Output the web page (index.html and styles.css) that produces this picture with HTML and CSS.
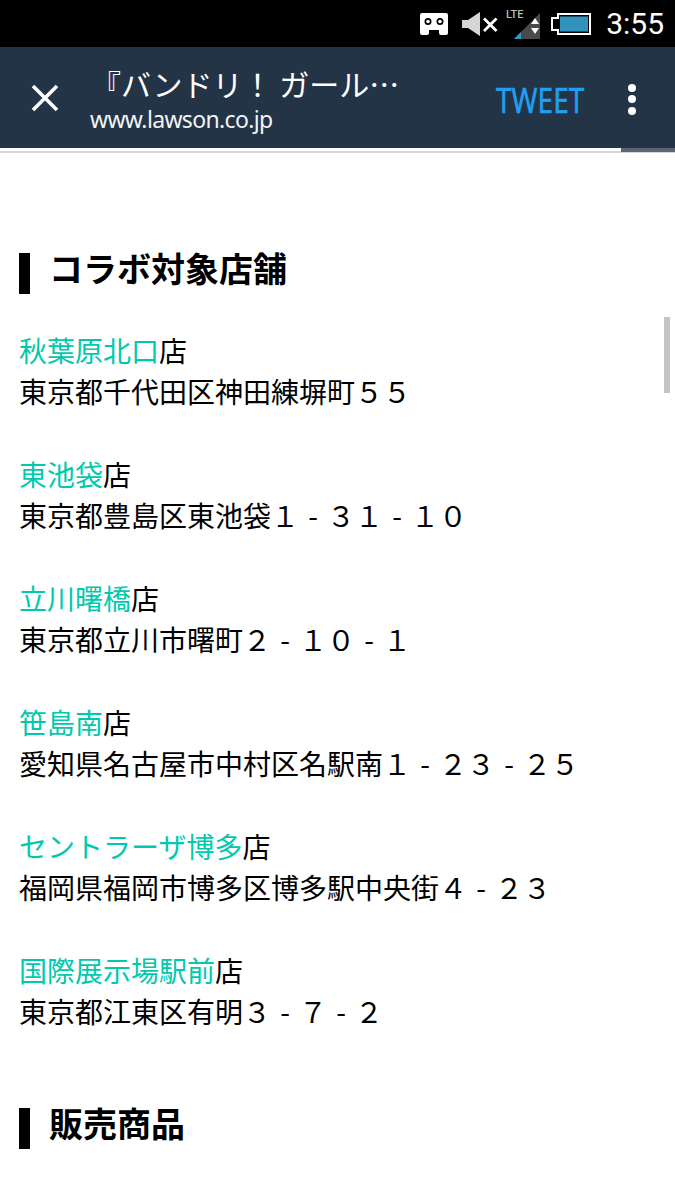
FILE: index.html
```html
<!DOCTYPE html>
<html lang="ja">
<head>
  <meta charset="UTF-8" />
  <title>コラボ対象店舗</title>
  <link rel="stylesheet" href="styles.css">
</head>
<body>

  <div class="status-bar">
    <svg class="ic-voicemail" width="28" height="22" viewBox="0 0 28 22">
      <path fill="#fff" fill-rule="evenodd" d="M2 0h24a2 2 0 0 1 2 2v18a2 2 0 0 1-2 2h-5a2 2 0 0 1-2-2v-3H9v3a2 2 0 0 1-2 2H2a2 2 0 0 1-2-2V2a2 2 0 0 1 2-2zM8 5a3.5 3.5 0 1 0 0 7 3.5 3.5 0 0 0 0-7zm12 0a3.5 3.5 0 1 0 0 7 3.5 3.5 0 0 0 0-7z"/>
      <circle cx="8" cy="8.500" r="1.800" fill="#fff"/>
      <circle cx="20" cy="8.500" r="1.800" fill="#fff"/>
    </svg>
    <svg class="ic-mute" width="36" height="24" viewBox="0 0 36 24">
      <path fill="#d6d6d6" d="M0 8h6l12-8v24L6 16H0z"/>
      <path stroke="#fff" stroke-width="2.800" d="M22 6.500l12.500 12.500M34.500 6.500L22 19"/>
    </svg>
    <svg class="ic-signal" width="36" height="32" viewBox="0 0 36 32">
      <text x="2" y="11" class="lte">LTE</text>
      <path fill="#4a4a4a" d="M36 6v26H10z"/>
      <path fill="#2b9ac4" d="M17 25v7H10z"/>
      <path fill="#fff" d="M31 11l4 6h-8zM27 21h8l-4 6z"/>
    </svg>
    <svg class="ic-battery" width="40" height="22" viewBox="0 0 40 22">
      <path fill="none" stroke="#fff" stroke-width="2" d="M7 1h32v20H7v-4H1V5h6z"/>
      <rect x="9" y="3.500" width="28" height="15" fill="#2f93bd"/>
    </svg>
    <span class="clock">3:55</span>
  </div>

  <div class="toolbar">
    <svg class="close-ic" width="28" height="28" viewBox="0 0 28 28">
      <path stroke="#fff" stroke-width="3.600" d="M2 2l24 24M26 2L2 26"/>
    </svg>
    <div class="title-box">
      <div class="title">『バンドリ！ ガール…</div>
      <div class="url">www.lawson.co.jp</div>
    </div>
    <span class="tweet">TWEET</span>
    <div class="kebab"><i></i><i></i><i></i></div>
  </div>
  <div class="progress"><div class="progress-rest"></div></div>

  <div class="scroll-thumb"></div>

  <div class="content">
    <h2 class="head">コラボ対象店舗</h2>

    <div class="shop">
      <p><a class="shop-link">秋葉原北口</a>店</p>
      <p>東京都千代田区神田練塀町５５</p>
    </div>
    <div class="shop">
      <p><a class="shop-link">東池袋</a>店</p>
      <p>東京都豊島区東池袋１<span class="dash">-</span>３１<span class="dash">-</span>１０</p>
    </div>
    <div class="shop">
      <p><a class="shop-link">立川曙橋</a>店</p>
      <p>東京都立川市曙町２<span class="dash">-</span>１０<span class="dash">-</span>１</p>
    </div>
    <div class="shop">
      <p><a class="shop-link">笹島南</a>店</p>
      <p>愛知県名古屋市中村区名駅南１<span class="dash">-</span>２３<span class="dash">-</span>２５</p>
    </div>
    <div class="shop">
      <p><a class="shop-link">セントラーザ博多</a>店</p>
      <p>福岡県福岡市博多区博多駅中央街４<span class="dash">-</span>２３</p>
    </div>
    <div class="shop">
      <p><a class="shop-link">国際展示場駅前</a>店</p>
      <p>東京都江東区有明３<span class="dash">-</span>７<span class="dash">-</span>２</p>
    </div>

    <h2 class="head head-next">販売商品</h2>
  </div>

</body>
</html>
```

FILE: styles.css
```css
* { box-sizing: border-box; margin: 0; padding: 0; }

html, body {
  height: 1200px;
  overflow: hidden;
}

body {
  font-family: "Noto Sans CJK JP", "Noto Sans", sans-serif;
  background-color: #fff;
  color: #000;
  position: relative;
}

.status-bar {
  height: 47px;
  background: #000;
  display: flex;
  align-items: center;
  justify-content: flex-end;
  padding-right: 11px;
}

.ic-voicemail { margin-right: 14px; }
.ic-mute { margin-right: 6px; }
.ic-signal { margin-right: 11px; margin-top: -2px; }
.ic-battery { margin-right: 15px; }

.lte {
  font-family: "Roboto", sans-serif;
  font-size: 11px;
  font-weight: 500;
  fill: #bbb;
}

.clock {
  font-family: "Roboto", sans-serif;
  font-size: 30px;
  color: #fff;
  line-height: 47px;
}

.toolbar {
  height: 101px;
  background: #243447;
  display: flex;
  align-items: center;
  color: #fff;
}

.close-ic {
  margin-left: 31px;
  margin-right: 31px;
  flex: none;
}

.title-box {
  width: 330px;
  flex: none;
  padding-bottom: 1px;
}

.title {
  font-size: 30px;
  line-height: 44px;
  padding-left: 1px;
  white-space: nowrap;
}

.url {
  font-family: "Noto Sans", sans-serif;
  font-size: 23px;
  letter-spacing: -0.65px;
  line-height: 28px;
  color: #f1f3f5;
}

.tweet {
  font-family: "Noto Sans", sans-serif;
  font-size: 35px;
  color: #1da1f2;
  -webkit-text-stroke: 0.5px #1da1f2;
  margin-left: 76px;
  margin-top: 5px;
  line-height: 40px;
  transform: scaleX(0.8);
  transform-origin: left center;
}

.kebab {
  margin-left: 22px;
  margin-top: 3px;
  display: flex;
  flex-direction: column;
  gap: 3.5px;
}

.kebab i {
  display: block;
  width: 8px;
  height: 8px;
  border-radius: 50%;
  background: #fff;
}

.progress {
  height: 5px;
  background: #fff;
  border-bottom: 2px solid #d8d8d8;
  display: flex;
  justify-content: flex-end;
}

.progress-rest {
  width: 54px;
  height: 4px;
  background: #5a6672;
}

.scroll-thumb {
  position: absolute;
  top: 317px;
  left: 664px;
  width: 6px;
  height: 76px;
  background: #c4c4c4;
}

.content {
  padding: 100px 19px 0;
}

.head {
  font-size: 34px;
  font-weight: 700;
  line-height: 29px;
  padding-bottom: 12px;
  border-left: 11px solid #000;
  padding-left: 19px;
}

.head-next { margin-top: 76px; }

.shop {
  font-size: 28px;
  line-height: 41px;
  margin-bottom: 42px;
  white-space: nowrap;
}

.head + .shop { margin-top: 36px; }
.shop:last-of-type { margin-bottom: 0; }

.shop-link { color: #00c9ad; }

.dash {
  display: inline-block;
  width: 1em;
  text-align: center;
}
```
